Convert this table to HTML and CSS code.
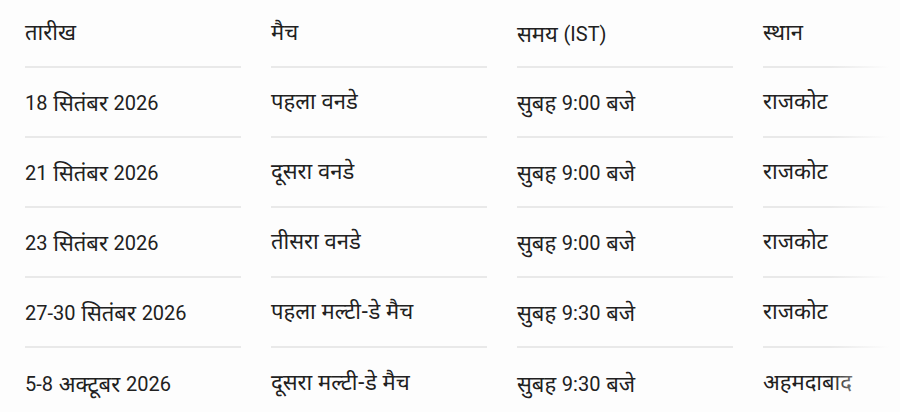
FILE: index.html
```html
<!DOCTYPE html>
<html lang="hi">
<head>
<meta charset="utf-8">
<link rel="stylesheet" href="styles.css">
</head>
<body>
<div class="wrap">
  <div class="table">
    <div class="cell head">तारीख</div>
    <div class="cell head">मैच</div>
    <div class="cell head">समय <span class="lat">(IST)</span></div>
    <div class="cell head">स्थान</div>

    <div class="cell"><span class="lat">18</span> सितंबर <span class="lat">2026</span></div>
    <div class="cell">पहला वनडे</div>
    <div class="cell">सुबह <span class="lat">9:00</span> बजे</div>
    <div class="cell">राजकोट</div>

    <div class="cell"><span class="lat">21</span> सितंबर <span class="lat">2026</span></div>
    <div class="cell">दूसरा वनडे</div>
    <div class="cell">सुबह <span class="lat">9:00</span> बजे</div>
    <div class="cell">राजकोट</div>

    <div class="cell"><span class="lat">23</span> सितंबर <span class="lat">2026</span></div>
    <div class="cell">तीसरा वनडे</div>
    <div class="cell">सुबह <span class="lat">9:00</span> बजे</div>
    <div class="cell">राजकोट</div>

    <div class="cell"><span class="lat">27-30</span> सितंबर <span class="lat">2026</span></div>
    <div class="cell">पहला मल्टी-डे मैच</div>
    <div class="cell">सुबह <span class="lat">9:30</span> बजे</div>
    <div class="cell">राजकोट</div>

    <div class="cell last"><span class="lat">5-8</span> अक्टूबर <span class="lat">2026</span></div>
    <div class="cell last">दूसरा मल्टी-डे मैच</div>
    <div class="cell last">सुबह <span class="lat">9:30</span> बजे</div>
    <div class="cell last">अहमदाबाद</div>
  </div>
  <div class="fade"></div>
</div>
</body>
</html>
```

FILE: styles.css
```css
html, body {
  margin: 0;
  padding: 0;
  background: #fdfdfd;
}
body {
  font-family: "Noto Sans Devanagari", "Noto Sans", sans-serif;
  color: #212121;
  font-size: 22px;
  overflow: hidden;
}
.lat {
  font-family: Roboto, "Noto Sans", sans-serif;
  font-size: 20px;
  vertical-align: 1px;
}
.wrap {
  position: relative;
  width: 900px;
  overflow: hidden;
}
.table {
  display: grid;
  grid-template-columns: repeat(4, 216px);
  column-gap: 30px;
  padding-left: 25px;
  width: max-content;
}
.cell {
  height: 68px;
  line-height: 71px;
  border-bottom: 2px solid #e9e9e9;
  white-space: nowrap;
}
.cell.head {
  height: 66px;
  line-height: 69px;
}
.cell.last {
  border-bottom: none;
  height: 70px;
  line-height: 73px;
}
.fade {
  position: absolute;
  top: 0;
  right: 0;
  bottom: 0;
  width: 70px;
  background: linear-gradient(to right, rgba(253,253,253,0), #fdfdfd 85%);
  pointer-events: none;
}
```
